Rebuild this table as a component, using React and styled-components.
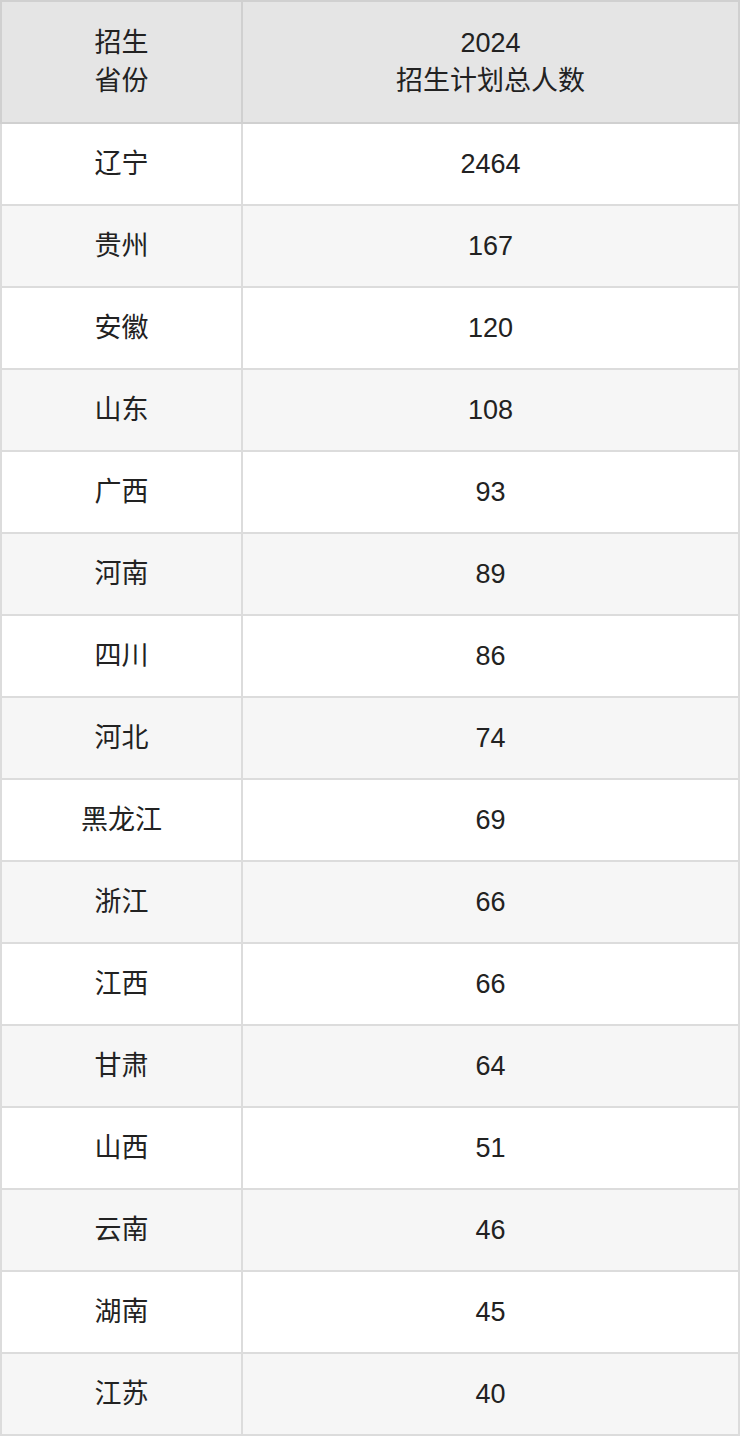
import React from "react";
import styled, { createGlobalStyle } from "styled-components";

const Global = createGlobalStyle`
  html, body { margin: 0; padding: 0; background: #fff; }
  body { font-family: "Liberation Sans", Arial, "Noto Sans CJK SC", sans-serif; }
`;

const Table = styled.table`
  width: 740px;
  border-collapse: collapse;
  table-layout: fixed;
  color: #222;
  font-size: 27px;
`;

const Col1 = styled.col`
  width: 241px;
`;

const HeadCell = styled.th`
  height: 120px;
  padding: 0;
  background: #e5e5e5;
  border: 2px solid #d0d0d0;
  font-weight: normal;
  line-height: 38px;
  text-align: center;
  vertical-align: middle;
`;

const Row = styled.tr`
  background: ${(p) => (p.$alt ? "#f6f6f6" : "#ffffff")};
`;

const Cell = styled.td`
  height: 80px;
  padding: 0;
  border: 2px solid #dcdcdc;
  text-align: center;
  vertical-align: middle;
  line-height: 30px;
`;

const data = [
  ["辽宁", 2464],
  ["贵州", 167],
  ["安徽", 120],
  ["山东", 108],
  ["广西", 93],
  ["河南", 89],
  ["四川", 86],
  ["河北", 74],
  ["黑龙江", 69],
  ["浙江", 66],
  ["江西", 66],
  ["甘肃", 64],
  ["山西", 51],
  ["云南", 46],
  ["湖南", 45],
  ["江苏", 40],
];

export default function App() {
  return (
    <>
      <Global />
      <Table>
        <colgroup>
          <Col1 />
          <col />
        </colgroup>
        <thead>
          <tr>
            <HeadCell>
              招生
              <br />
              省份
            </HeadCell>
            <HeadCell>
              2024
              <br />
              招生计划总人数
            </HeadCell>
          </tr>
        </thead>
        <tbody>
          {data.map(([p, n], i) => (
            <Row key={p} $alt={i % 2 === 1}>
              <Cell>{p}</Cell>
              <Cell>{n}</Cell>
            </Row>
          ))}
        </tbody>
      </Table>
    </>
  );
}
